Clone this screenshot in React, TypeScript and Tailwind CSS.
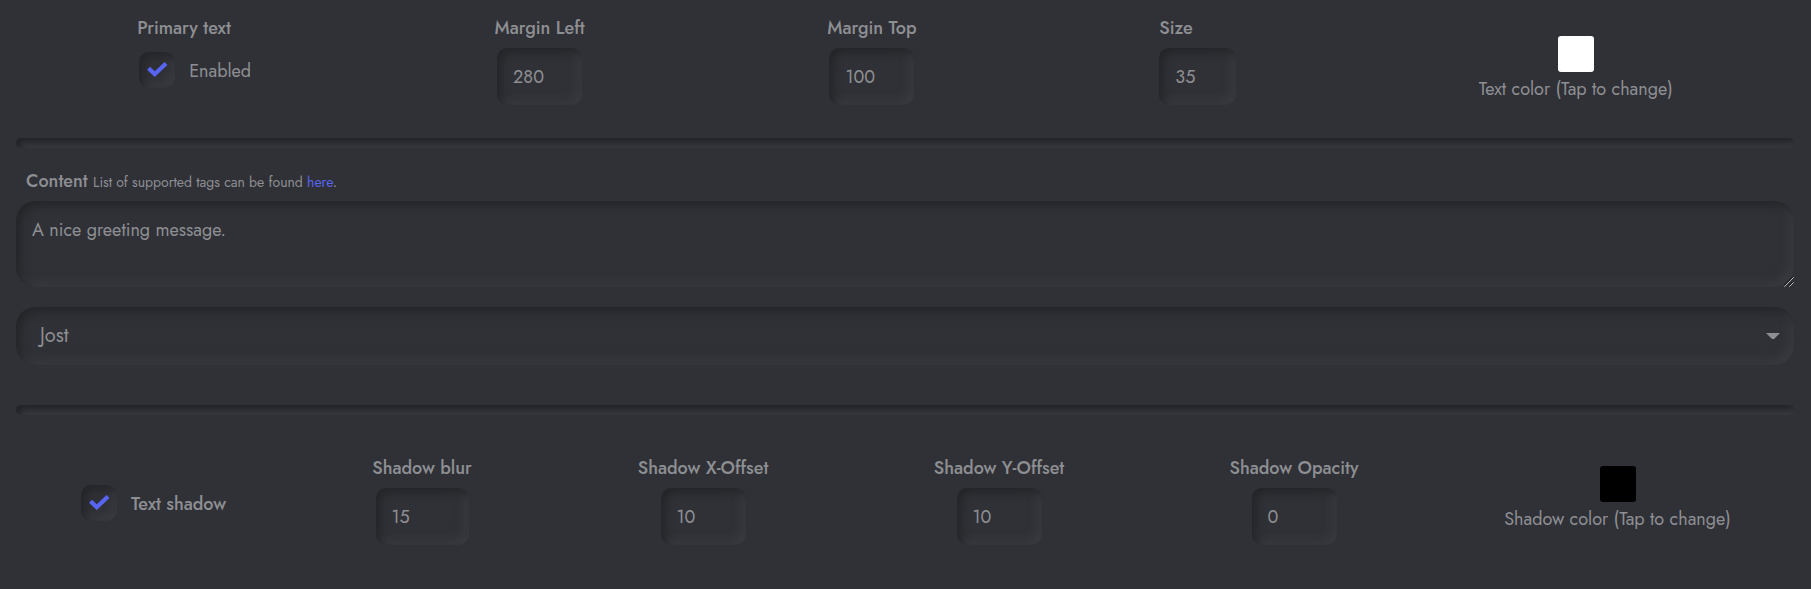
import { ReactNode, useId, useState } from "react";

const inset =
  "bg-[#303136] shadow-[inset_4px_4px_10px_#232428,inset_-4px_-4px_10px_#3c3d43]";

function Divider() {
  return (
    <hr className="h-[10px] rounded-[5px] border-0 bg-[#303136] shadow-[inset_4px_4px_6px_#232428,inset_-4px_-4px_6px_#393a40]" />
  );
}

function NumberField({
  label,
  value,
  column,
  width,
  align = "items-center",
}: {
  label: string;
  value: string;
  column: string;
  width: string;
  align?: string;
}) {
  const id = useId();
  const [current, setCurrent] = useState(value);
  return (
    <div className={`flex flex-col gap-[6px] ${align} ${column}`}>
      <label htmlFor={id} className="font-medium whitespace-nowrap">
        {label}
      </label>
      <input
        id={id}
        inputMode="numeric"
        value={current}
        onChange={(e) => setCurrent(e.target.value)}
        className={`h-[57px] rounded-[10px] px-4 outline-none ${inset} ${width}`}
      />
    </div>
  );
}

function Toggle({ children, className = "" }: { children: ReactNode; className?: string }) {
  const [checked, setChecked] = useState(true);
  return (
    <label className={`flex items-center gap-[14px] whitespace-nowrap ${className}`}>
      <span className="grid shrink-0">
        <input
          type="checkbox"
          checked={checked}
          onChange={(e) => setChecked(e.target.checked)}
          className={`peer col-start-1 row-start-1 size-9 appearance-none rounded-[10px] ${inset}`}
        />
        <svg
          viewBox="0 0 36 36"
          className="pointer-events-none invisible col-start-1 row-start-1 size-9 text-[#5865f2] peer-checked:visible"
          fill="none"
          stroke="currentColor"
          strokeWidth="4.2"
          aria-hidden="true"
        >
          <path d="M9.6 16.2 L15.7 22.2 L27 11.4" />
        </svg>
      </span>
      <span className="pt-[3px]">{children}</span>
    </label>
  );
}

function Swatch({ label, color, column }: { label: string; color: string; column: string }) {
  return (
    <div className={`flex justify-center ${column}`}>
      <button type="button" className="flex flex-col items-center gap-1 whitespace-nowrap">
        <span className={`size-9 rounded-[3px] ${color}`} />
        {label}
      </button>
    </div>
  );
}

export default function App() {
  const [text, setText] = useState("A nice greeting message.");
  return (
    <main className="min-h-screen bg-[#303136] pt-[15px] pr-[17px] pl-4 font-[Jost,Lato,sans-serif] text-lg leading-[27px] text-[#8e8f93]">
      <section className="flex justify-around">
        <div className="w-[115px]">
          <div className="font-medium">Primary text</div>
          <Toggle className="mt-[10px] pl-[2px]">Enabled</Toggle>
        </div>
        <NumberField label="Margin Left" value="280" column="w-[90px]" width="w-[85px]" />
        <NumberField label="Margin Top" value="100" column="w-[90px]" width="w-[85px]" />
        <NumberField label="Size" value="35" column="w-[77px]" width="w-[77px]" align="items-start" />
        <Swatch label="Text color (Tap to change)" color="bg-white" column="w-[194px] pt-[21px]" />
      </section>

      <div className="mt-[33px]">
        <Divider />
      </div>

      <section className="mt-5">
        <div className="pl-[10px]">
          <label htmlFor="content" className="font-medium">
            Content
          </label>{" "}
          <span className="text-sm leading-[27px]">
            List of supported tags can be found{" "}
            <a href="#tags" className="text-[#5865f2]">
              here
            </a>
            .
          </span>
        </div>
        <div className="mt-[5px] grid">
          <textarea
            id="content"
            value={text}
            onChange={(e) => setText(e.target.value)}
            className={`col-start-1 row-start-1 block h-[86px] w-full resize-y rounded-[20px] px-4 py-4 outline-none [&::-webkit-resizer]:hidden ${inset}`}
          />
          <svg
            viewBox="0 0 10 10"
            className="pointer-events-none col-start-1 row-start-1 size-[10px] self-end justify-self-end"
            fill="none"
            strokeWidth="1"
            aria-hidden="true"
          >
            <path d="M0 8.6 L8.6 0 M5 8.6 L8.6 5" stroke="#111" />
            <path d="M0.3 9.7 L9.7 0.3 M5.3 9.7 L9.7 5.3" stroke="#c4c4c4" />
          </svg>
        </div>
        <div className="mt-5 grid items-center">
          <select
            aria-label="Font"
            className={`col-start-1 row-start-1 h-[58px] w-full appearance-none rounded-[20px] px-4 indent-2 text-xl outline-none ${inset}`}
          >
            <option>Jost</option>
          </select>
          <svg
            viewBox="0 0 14 6"
            className="pointer-events-none col-start-1 row-start-1 mr-[14px] h-[6px] w-[14px] justify-self-end"
            fill="currentColor"
            aria-hidden="true"
          >
            <path d="M0 0H14L8 6H6Z" />
          </svg>
        </div>
      </section>

      <div className="mt-10">
        <Divider />
      </div>

      <section className="mt-10 flex justify-around">
        <div className="flex w-[107px] justify-center pt-[30px]">
          <Toggle className="self-start pl-[2px] font-medium">Text shadow</Toggle>
        </div>
        <NumberField label="Shadow blur" value="15" column="w-[100px]" width="w-[93px]" />
        <NumberField label="Shadow X-Offset" value="10" column="w-[130px]" width="w-[85px]" />
        <NumberField label="Shadow Y-Offset" value="10" column="w-[130px]" width="w-[85px]" />
        <NumberField label="Shadow Opacity" value="0" column="w-[128px]" width="w-[85px]" />
        <Swatch label="Shadow color (Tap to change)" color="bg-black" column="w-[187px] pt-[11px]" />
      </section>
    </main>
  );
}
